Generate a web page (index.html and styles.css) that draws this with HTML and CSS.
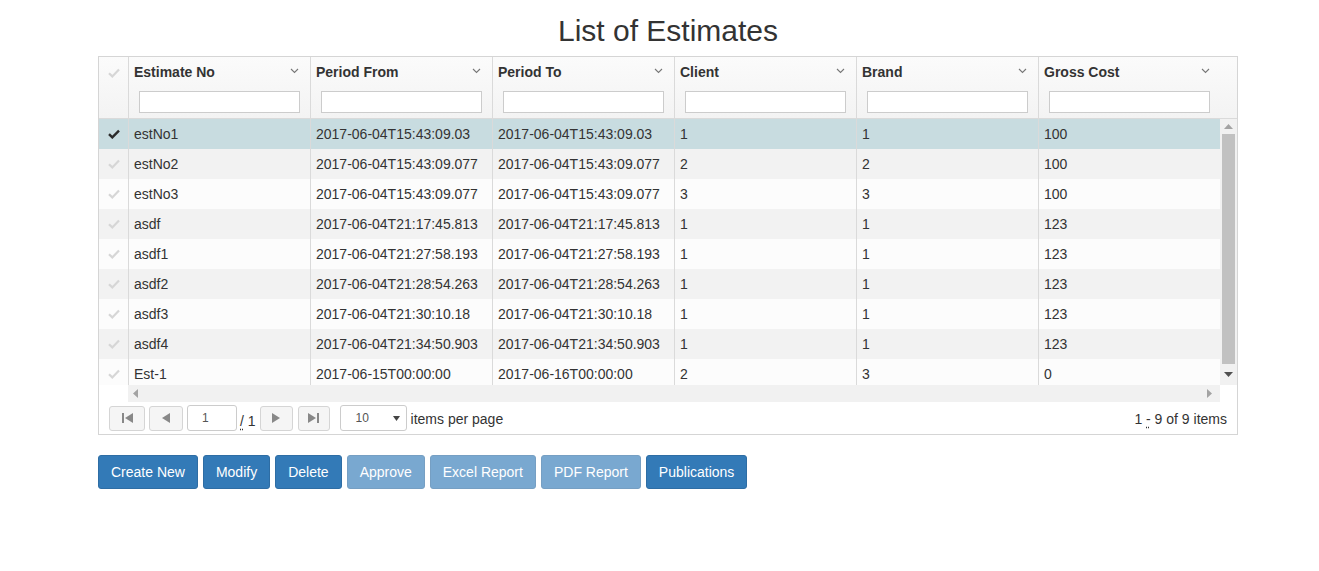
FILE: index.html
```html
<!DOCTYPE html>
<html>
<head>
<meta charset="utf-8">
<link rel="stylesheet" href="styles.css">
</head>
<body>
<div class="page">
  <h1 class="title">List of Estimates</h1>
  <div class="grid">
    <div class="grid-header">
      <div class="hcell check-col">
        <svg class="chk light" width="12" height="10" viewBox="0 0 12 10"><path d="M1 5.2 L4.3 8.4 L11 1.6" fill="none" stroke="currentColor" stroke-width="2.2"/></svg>
      </div>
      <div class="hcell col">
        <div class="htitle"><span>Estimate No</span><svg class="chev" width="9" height="6" viewBox="0 0 9 6"><path d="M1 1 L4.5 4.5 L8 1" fill="none" stroke="currentColor" stroke-width="1.1"/></svg></div>
        <input class="filter" type="text">
      </div>
      <div class="hcell col">
        <div class="htitle"><span>Period From</span><svg class="chev" width="9" height="6" viewBox="0 0 9 6"><path d="M1 1 L4.5 4.5 L8 1" fill="none" stroke="currentColor" stroke-width="1.1"/></svg></div>
        <input class="filter" type="text">
      </div>
      <div class="hcell col">
        <div class="htitle"><span>Period To</span><svg class="chev" width="9" height="6" viewBox="0 0 9 6"><path d="M1 1 L4.5 4.5 L8 1" fill="none" stroke="currentColor" stroke-width="1.1"/></svg></div>
        <input class="filter" type="text">
      </div>
      <div class="hcell col">
        <div class="htitle"><span>Client</span><svg class="chev" width="9" height="6" viewBox="0 0 9 6"><path d="M1 1 L4.5 4.5 L8 1" fill="none" stroke="currentColor" stroke-width="1.1"/></svg></div>
        <input class="filter" type="text">
      </div>
      <div class="hcell col">
        <div class="htitle"><span>Brand</span><svg class="chev" width="9" height="6" viewBox="0 0 9 6"><path d="M1 1 L4.5 4.5 L8 1" fill="none" stroke="currentColor" stroke-width="1.1"/></svg></div>
        <input class="filter" type="text">
      </div>
      <div class="hcell col last">
        <div class="htitle"><span>Gross Cost</span><svg class="chev" width="9" height="6" viewBox="0 0 9 6"><path d="M1 1 L4.5 4.5 L8 1" fill="none" stroke="currentColor" stroke-width="1.1"/></svg></div>
        <input class="filter" type="text">
      </div>
      <div class="hcell filler"></div>
    </div>

    <div class="grid-body">
      <div class="rows">
        <div class="row selected">
          <div class="cell check-col"><svg class="chk dark" width="12" height="10" viewBox="0 0 12 10"><path d="M1 5.2 L4.3 8.4 L11 1.6" fill="none" stroke="currentColor" stroke-width="2.4"/></svg></div>
          <div class="cell col">estNo1</div><div class="cell col">2017-06-04T15:43:09.03</div><div class="cell col">2017-06-04T15:43:09.03</div><div class="cell col">1</div><div class="cell col">1</div><div class="cell col last">100</div>
        </div>
        <div class="row alt">
          <div class="cell check-col"><svg class="chk light" width="12" height="10" viewBox="0 0 12 10"><path d="M1 5.2 L4.3 8.4 L11 1.6" fill="none" stroke="currentColor" stroke-width="2.2"/></svg></div>
          <div class="cell col">estNo2</div><div class="cell col">2017-06-04T15:43:09.077</div><div class="cell col">2017-06-04T15:43:09.077</div><div class="cell col">2</div><div class="cell col">2</div><div class="cell col last">100</div>
        </div>
        <div class="row">
          <div class="cell check-col"><svg class="chk light" width="12" height="10" viewBox="0 0 12 10"><path d="M1 5.2 L4.3 8.4 L11 1.6" fill="none" stroke="currentColor" stroke-width="2.2"/></svg></div>
          <div class="cell col">estNo3</div><div class="cell col">2017-06-04T15:43:09.077</div><div class="cell col">2017-06-04T15:43:09.077</div><div class="cell col">3</div><div class="cell col">3</div><div class="cell col last">100</div>
        </div>
        <div class="row alt">
          <div class="cell check-col"><svg class="chk light" width="12" height="10" viewBox="0 0 12 10"><path d="M1 5.2 L4.3 8.4 L11 1.6" fill="none" stroke="currentColor" stroke-width="2.2"/></svg></div>
          <div class="cell col">asdf</div><div class="cell col">2017-06-04T21:17:45.813</div><div class="cell col">2017-06-04T21:17:45.813</div><div class="cell col">1</div><div class="cell col">1</div><div class="cell col last">123</div>
        </div>
        <div class="row">
          <div class="cell check-col"><svg class="chk light" width="12" height="10" viewBox="0 0 12 10"><path d="M1 5.2 L4.3 8.4 L11 1.6" fill="none" stroke="currentColor" stroke-width="2.2"/></svg></div>
          <div class="cell col">asdf1</div><div class="cell col">2017-06-04T21:27:58.193</div><div class="cell col">2017-06-04T21:27:58.193</div><div class="cell col">1</div><div class="cell col">1</div><div class="cell col last">123</div>
        </div>
        <div class="row alt">
          <div class="cell check-col"><svg class="chk light" width="12" height="10" viewBox="0 0 12 10"><path d="M1 5.2 L4.3 8.4 L11 1.6" fill="none" stroke="currentColor" stroke-width="2.2"/></svg></div>
          <div class="cell col">asdf2</div><div class="cell col">2017-06-04T21:28:54.263</div><div class="cell col">2017-06-04T21:28:54.263</div><div class="cell col">1</div><div class="cell col">1</div><div class="cell col last">123</div>
        </div>
        <div class="row">
          <div class="cell check-col"><svg class="chk light" width="12" height="10" viewBox="0 0 12 10"><path d="M1 5.2 L4.3 8.4 L11 1.6" fill="none" stroke="currentColor" stroke-width="2.2"/></svg></div>
          <div class="cell col">asdf3</div><div class="cell col">2017-06-04T21:30:10.18</div><div class="cell col">2017-06-04T21:30:10.18</div><div class="cell col">1</div><div class="cell col">1</div><div class="cell col last">123</div>
        </div>
        <div class="row alt">
          <div class="cell check-col"><svg class="chk light" width="12" height="10" viewBox="0 0 12 10"><path d="M1 5.2 L4.3 8.4 L11 1.6" fill="none" stroke="currentColor" stroke-width="2.2"/></svg></div>
          <div class="cell col">asdf4</div><div class="cell col">2017-06-04T21:34:50.903</div><div class="cell col">2017-06-04T21:34:50.903</div><div class="cell col">1</div><div class="cell col">1</div><div class="cell col last">123</div>
        </div>
        <div class="row">
          <div class="cell check-col"><svg class="chk light" width="12" height="10" viewBox="0 0 12 10"><path d="M1 5.2 L4.3 8.4 L11 1.6" fill="none" stroke="currentColor" stroke-width="2.2"/></svg></div>
          <div class="cell col">Est-1</div><div class="cell col">2017-06-15T00:00:00</div><div class="cell col">2017-06-16T00:00:00</div><div class="cell col">2</div><div class="cell col">3</div><div class="cell col last">0</div>
        </div>
      </div>
      <div class="vscroll">
        <svg class="arrow up" width="9" height="5" viewBox="0 0 9 5"><path d="M0 5 L4.5 0 L9 5 Z" fill="currentColor"/></svg>
        <div class="thumb"></div>
        <svg class="arrow down" width="9" height="5" viewBox="0 0 9 5"><path d="M0 0 L4.5 5 L9 0 Z" fill="currentColor"/></svg>
      </div>
    </div>

    <div class="hstrip">
      <div class="hblank"></div>
      <div class="hscroll">
        <svg class="harrow" width="5" height="9" viewBox="0 0 5 9"><path d="M5 0 L0 4.5 L5 9 Z" fill="currentColor"/></svg>
        <svg class="harrow" width="5" height="9" viewBox="0 0 5 9"><path d="M0 0 L5 4.5 L0 9 Z" fill="currentColor"/></svg>
      </div>
      <div class="hcorner"></div>
    </div>

    <div class="pager">
      <div class="pager-left">
        <span class="pbtn first"><svg width="11" height="10" viewBox="0 0 11 10"><rect x="0" y="0" width="2" height="10" fill="currentColor"/><path d="M11 0 L3 5 L11 10 Z" fill="currentColor"/></svg></span>
        <span class="pbtn prev"><svg width="8" height="10" viewBox="0 0 8 10"><path d="M8 0 L0 5 L8 10 Z" fill="currentColor"/></svg></span>
        <span class="pinput">1</span>
        <span class="of"><span class="dotted">/</span> 1</span>
        <span class="pbtn next"><svg width="8" height="10" viewBox="0 0 8 10"><path d="M0 0 L8 5 L0 10 Z" fill="currentColor"/></svg></span>
        <span class="pbtn last"><svg width="11" height="10" viewBox="0 0 11 10"><path d="M0 0 L8 5 L0 10 Z" fill="currentColor"/><rect x="9" y="0" width="2" height="10" fill="currentColor"/></svg></span>
        <span class="psize"><span>10</span><svg width="7" height="5" viewBox="0 0 7 5"><path d="M0 0 L3.5 5 L7 0 Z" fill="currentColor"/></svg></span>
        <span class="ipp">items per page</span>
      </div>
      <div class="pager-info">1 <span class="dotted">-</span> 9 of 9 items</div>
    </div>
  </div>

  <div class="actions">
    <button class="btn">Create New</button>
    <button class="btn">Modify</button>
    <button class="btn">Delete</button>
    <button class="btn disabled">Approve</button>
    <button class="btn disabled">Excel Report</button>
    <button class="btn disabled">PDF Report</button>
    <button class="btn">Publications</button>
  </div>
</div>
</body>
</html>
```

FILE: styles.css
```css
* { box-sizing: border-box; }

body {
  margin: 0;
  background: #fff;
  font-family: "Liberation Sans", Arial, sans-serif;
  font-size: 14px;
  color: #333;
}

.page {
  width: 1140px;
  margin-left: 98px;
}

.title {
  margin: 14px 0 9px;
  font-size: 30px;
  line-height: 33px;
  font-weight: 400;
  text-align: center;
  color: #333;
}

.grid {
  border: 1px solid #d5d5d5;
  width: 1140px;
}

/* header */
.grid-header {
  display: flex;
  height: 62px;
  border-bottom: 1px solid #dadada;
  background: linear-gradient(#fbfbfb, #f3f3f3);
}

.hcell {
  height: 61px;
  border-right: 1px solid #dadada;
}

.check-col {
  width: 30px;
  flex: none;
  border-right: 1px solid #dadada;
  display: flex;
  justify-content: center;
}

.grid-header .check-col {
  align-items: flex-start;
  padding-top: 11px;
  padding-left: 1px;
}

.col {
  width: 182px;
  flex: none;
  border-right: 1px solid #dadada;
}

.hcell.col.last { border-right: none; }

.filler {
  width: 17px;
  flex: none;
  border-right: none;
}

.htitle {
  display: flex;
  justify-content: space-between;
  align-items: center;
  height: 16px;
  margin-top: 7px;
  padding: 0 11px 0 5px;
  font-weight: 700;
  line-height: 16px;
  color: #333;
}

.chev { color: #777; margin-top: -3px; }

.filter {
  display: block;
  width: 161px;
  height: 22px;
  margin: 11px 0 0 10px;
  border: 1px solid #ccc;
  background: #fff;
  padding: 0;
  font: inherit;
}

.chk.light { color: #d6d6d6; }
.chk.dark { color: #2b2b2b; }

/* body */
.grid-body {
  display: flex;
  height: 266px;
}

.rows {
  width: 1121px;
  height: 266px;
  overflow: hidden;
}

.row {
  display: flex;
  height: 30px;
  background: #fcfcfc;
}

.row.alt { background: #f2f2f2; }
.row.selected { background: #c8dce0; }

.cell {
  height: 30px;
  line-height: 30px;
  white-space: nowrap;
  overflow: hidden;
}

.cell.col {
  padding-left: 5px;
}

.row .check-col {
  align-items: center;
  padding-left: 1px;
}

.row .col.last {
  width: 181px;
  border-right: none;
}

.vscroll {
  width: 17px;
  height: 266px;
  background: #f1f1f1;
  display: flex;
  flex-direction: column;
  align-items: center;
}

.arrow.up { color: #a3a3a3; margin-top: 5px; }
.arrow.down { color: #505050; margin-top: 8px; }

.thumb {
  width: 13px;
  height: 230px;
  margin-top: 5px;
  background: #c1c1c1;
}

.hstrip {
  display: flex;
  height: 17px;
}

.hblank { width: 29px; flex: none; background: #fff; }

.hscroll {
  width: 1092px;
  flex: none;
  background: #f1f1f1;
  display: flex;
  justify-content: space-between;
  align-items: center;
  padding: 0 8px 0 5px;
  color: #a3a3a3;
}

.hcorner { width: 17px; flex: none; background: #fff; }

/* pager */
.pager {
  height: 32px;
  display: flex;
  justify-content: space-between;
  align-items: flex-start;
  padding: 3px 10px 0 10px;
  background: #fff;
}

.pager-left {
  display: flex;
  align-items: center;
  height: 26px;
}

.pbtn {
  width: 34px;
  height: 25px;
  margin-right: 4px;
  border: 1px solid #d5d5d5;
  border-radius: 3px;
  background: #f5f5f5;
  color: #888;
  display: flex;
  align-items: center;
  justify-content: center;
}

.pbtn.first { width: 36px; }
.pbtn.next { width: 33px; margin-right: 5px; }
.pbtn.last { width: 32px; margin-right: 0; }

.pinput {
  width: 50px;
  height: 26px;
  border: 1px solid #ccc;
  border-radius: 3px;
  background: #fff;
  padding-left: 14px;
  line-height: 24px;
  font-size: 12px;
  color: #555;
}

.of {
  margin: 0 4px 0 3px;
  padding-top: 6px;
  font-size: 14px;
  color: #333;
}

.dotted {
  text-decoration: underline dotted;
  text-underline-offset: 3px;
}

.psize {
  width: 67px;
  height: 26px;
  margin-left: 10px;
  border: 1px solid #ccc;
  border-radius: 3px;
  background: #fff;
  display: flex;
  align-items: center;
  justify-content: space-between;
  padding: 0 6px 0 15px;
  font-size: 12px;
  color: #555;
}

.psize svg { color: #444; }

.ipp {
  margin-left: 4px;
  padding-top: 2px;
  font-size: 14px;
  color: #333;
}

.pager-info {
  height: 26px;
  line-height: 26px;
  padding-top: 1px;
  font-size: 14px;
  color: #333;
}

/* actions */
.actions {
  display: flex;
  gap: 5px;
  margin-top: 20px;
}

.btn {
  height: 34px;
  padding: 6px 12px;
  border: 1px solid #2e6da4;
  border-radius: 3px;
  background: #337ab7;
  color: #fff;
  font-family: "Liberation Sans", Arial, sans-serif;
  font-size: 14px;
  line-height: 20px;
}

.btn.disabled {
  opacity: 0.65;
}
```
